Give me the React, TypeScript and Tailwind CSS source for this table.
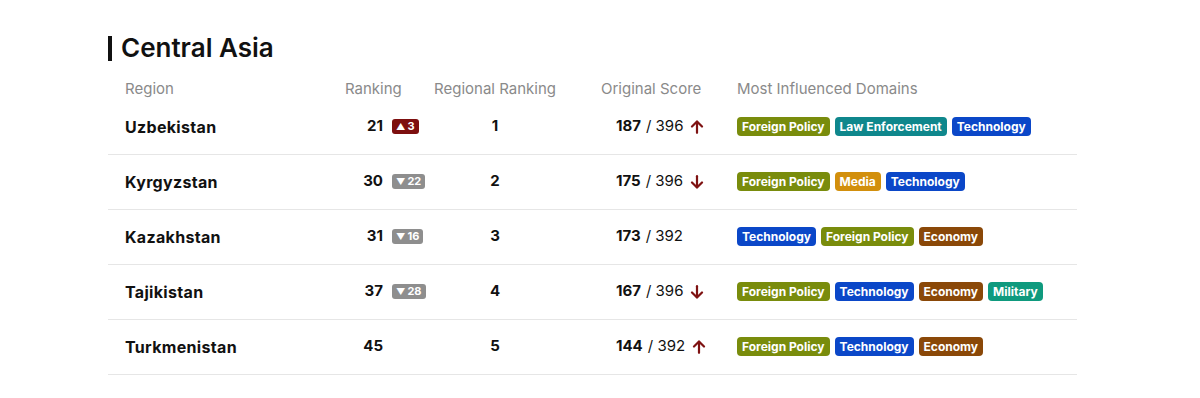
import React from "react";

type Tag = { label: string; cls: string };
const FP: Tag = { label: "Foreign Policy", cls: "bg-[#798c0c]" };
const LE: Tag = { label: "Law Enforcement", cls: "bg-[#0f878c]" };
const TE: Tag = { label: "Technology", cls: "bg-[#0b47c8]" };
const ME: Tag = { label: "Media", cls: "bg-[#d28f0c]" };
const EC: Tag = { label: "Economy", cls: "bg-[#8a4808]" };
const MI: Tag = { label: "Military", cls: "bg-[#0f9a7e]" };

type Row = {
  name: string;
  rank: number;
  change?: { dir: "up" | "down"; n: number };
  regional: number;
  score: number;
  total: number;
  arrow?: "up" | "down";
  tags: Tag[];
};

const rows: Row[] = [
  { name: "Uzbekistan", rank: 21, change: { dir: "up", n: 3 }, regional: 1, score: 187, total: 396, arrow: "up", tags: [FP, LE, TE] },
  { name: "Kyrgyzstan", rank: 30, change: { dir: "down", n: 22 }, regional: 2, score: 175, total: 396, arrow: "down", tags: [FP, ME, TE] },
  { name: "Kazakhstan", rank: 31, change: { dir: "down", n: 16 }, regional: 3, score: 173, total: 392, tags: [TE, FP, EC] },
  { name: "Tajikistan", rank: 37, change: { dir: "down", n: 28 }, regional: 4, score: 167, total: 396, arrow: "down", tags: [FP, TE, EC, MI] },
  { name: "Turkmenistan", rank: 45, regional: 5, score: 144, total: 392, arrow: "up", tags: [FP, TE, EC] },
];

function Arrow({ dir }: { dir: "up" | "down" }) {
  return (
    <svg
      width="14"
      height="14"
      viewBox="0 0 14 14"
      className={dir === "down" ? "rotate-180" : ""}
      fill="none"
      stroke="#7e1212"
      strokeWidth="2.2"
      strokeLinecap="round"
      strokeLinejoin="round"
    >
      <path d="M7 12.8V1.8" />
      <path d="M2 6.5L7 1.5L12 6.5" />
    </svg>
  );
}

const grid = "grid grid-cols-[220px_100px_134px_158px_1fr]";

export default function App() {
  return (
    <div
      className="w-[1200px] h-[398px] bg-white text-[#111]"
      style={{ fontFamily: "Inter, 'Noto Sans', sans-serif" }}
    >
      <div className="ml-[108px] w-[969px] pt-[32px]">
        <div className="flex items-center h-[32px]">
          <div className="w-[4px] h-[25px] bg-[#111]" />
          <h1 className="ml-[9px] text-[26px] font-semibold leading-[32px] text-[#111]">Central Asia</h1>
        </div>
        <div className={`${grid} mt-[14px] h-[22px] items-center text-[15px] text-[#8a8a8a]`}>
          <div className="pl-[17px]">Region</div>
          <div className="pl-[17px]">Ranking</div>
          <div className="text-center whitespace-nowrap">Regional Ranking</div>
          <div className="pl-[39px]">Original Score</div>
          <div className="pl-[17px]">Most Influenced Domains</div>
        </div>
        {rows.map((r) => (
          <div key={r.name} className={`${grid} h-[55px] items-center border-b border-[#e6e6e6] pb-[1px]`}>
            <div className="pl-[17px] text-[16px] tracking-[0.02em] font-bold">{r.name}</div>
            <div className="flex items-center">
              <span className="w-[55px] shrink-0 text-right text-[15px] font-bold">{r.rank}</span>
              {r.change && (
                <span
                  className={`ml-[9px] shrink-0 flex items-center h-[15px] px-[4px] rounded-[3px] text-[11px] font-bold text-white leading-none ${
                    r.change.dir === "up" ? "bg-[#7d0f0f]" : "bg-[#8e8e8e]"
                  }`}
                >
                  <span className="text-[9px] mr-[2px]">{r.change.dir === "up" ? "▲" : "▼"}</span>
                  {r.change.n}
                </span>
              )}
            </div>
            <div className="text-center text-[15px] font-bold">{r.regional}</div>
            <div className="pl-[54px] flex items-center text-[15px]">
              <span className="font-bold">{r.score}</span>
              <span className="ml-[5px]">/ {r.total}</span>
              {r.arrow && (
                <span className="ml-[7px] flex items-center">
                  <Arrow dir={r.arrow} />
                </span>
              )}
            </div>
            <div className="pl-[17px] flex items-center gap-[5px]">
              {r.tags.map((t, i) => (
                <span
                  key={i}
                  className={`${t.cls} h-[19px] flex items-center px-[5px] rounded-[4px] text-[12px] font-bold text-white leading-none`}
                >
                  {t.label}
                </span>
              ))}
            </div>
          </div>
        ))}
      </div>
    </div>
  );
}
